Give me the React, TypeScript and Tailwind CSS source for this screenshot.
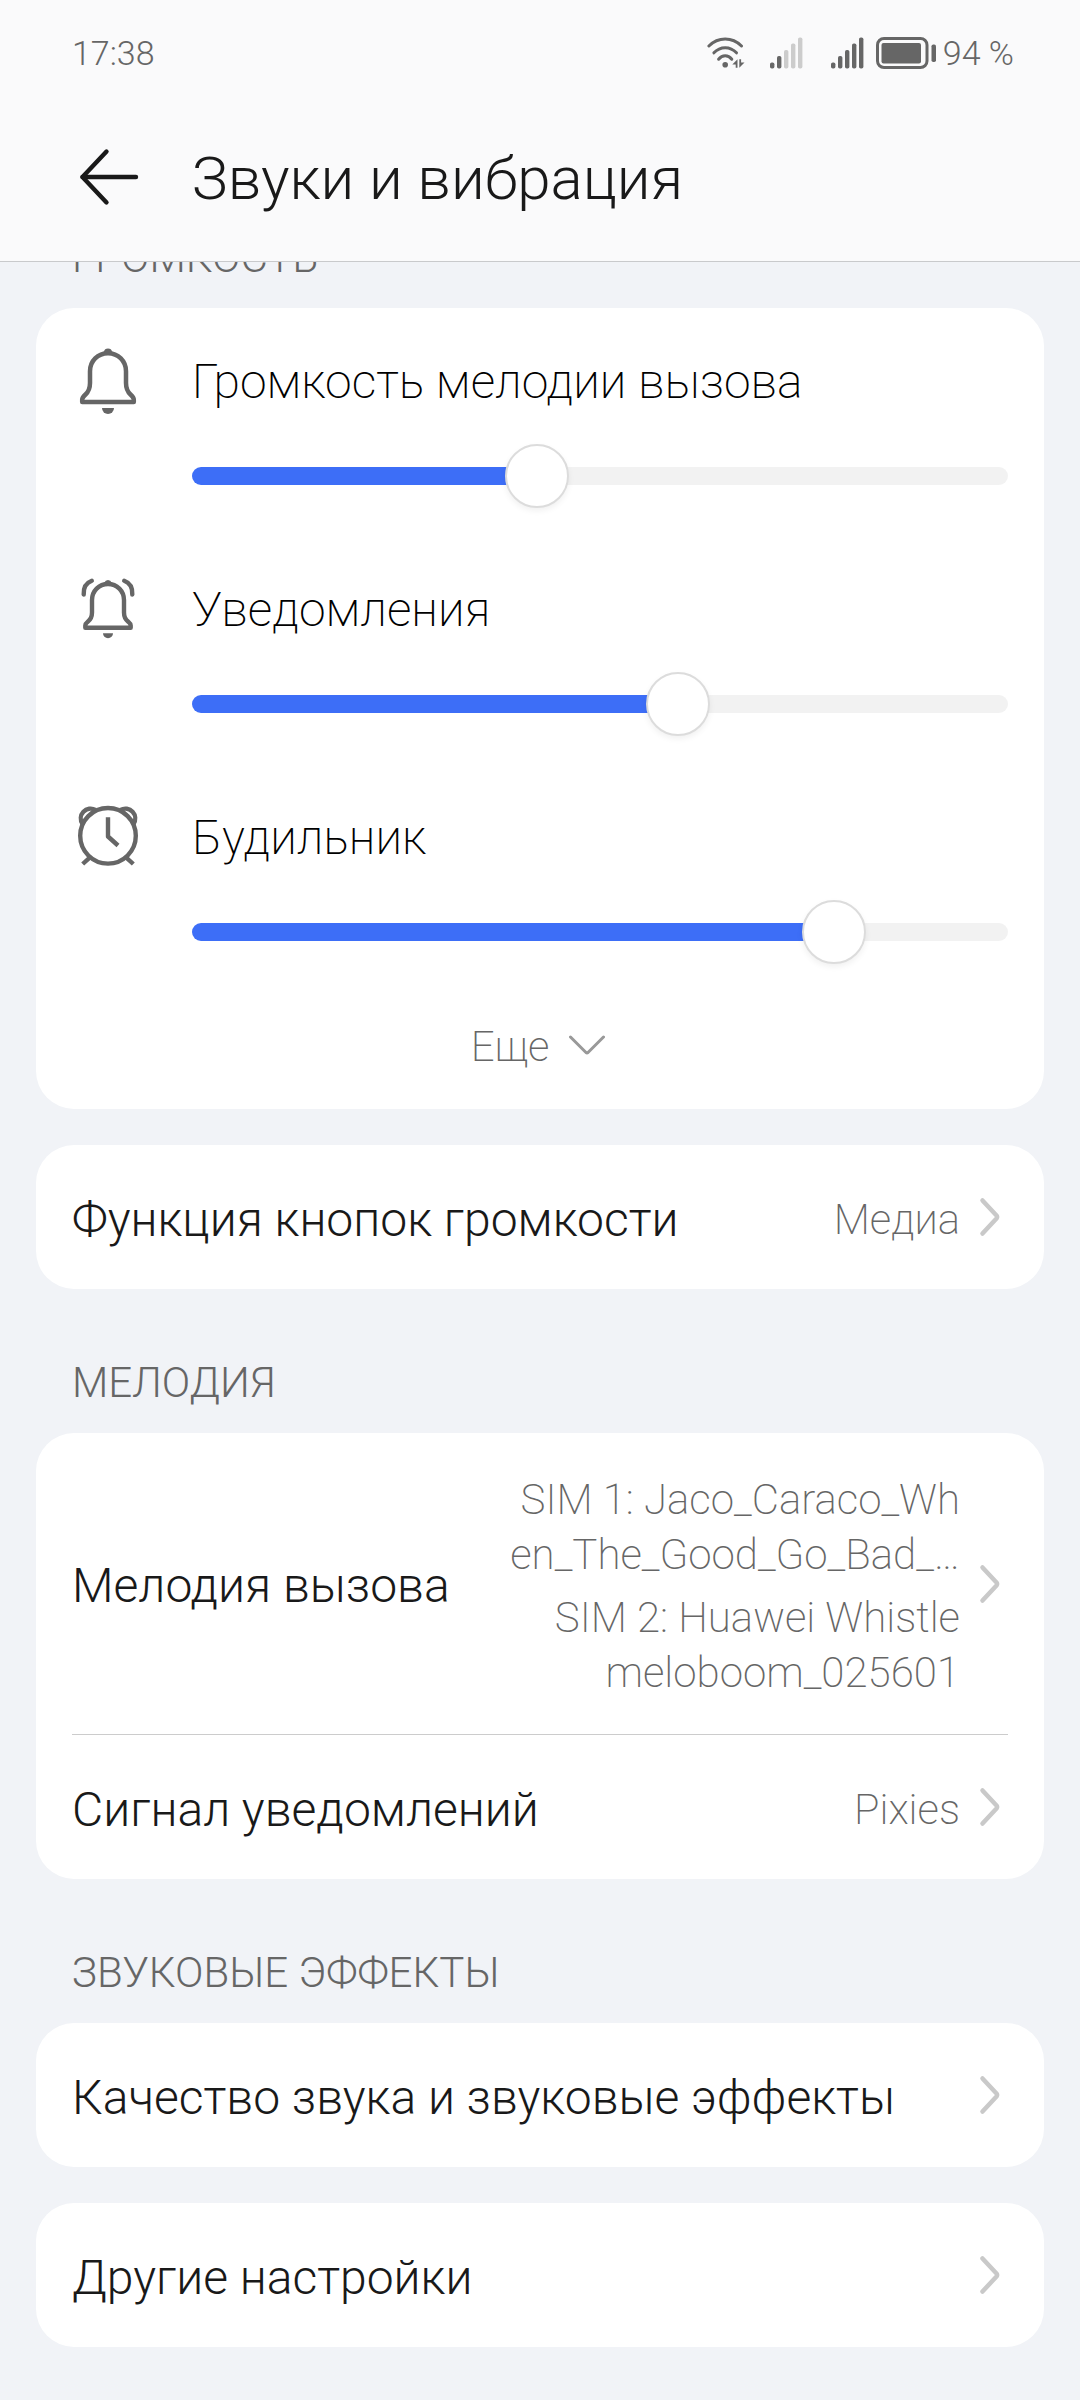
import { useState } from 'react'
import type { ReactNode } from 'react'

type Volume = { id: string; label: string; value: number; icon: ReactNode }

function BackIcon() {
  return (
    <svg viewBox="0 0 72 72" className="w-[72px] h-[72px]" fill="none" stroke="#191919" strokeWidth="4.4"
      strokeLinecap="round" strokeLinejoin="round" aria-hidden="true">
      <path d="M10.5 34H64" />
      <path d="M34.500 8.500L10.500 34l24 25.500" />
    </svg>
  )
}

function BellIcon() {
  return (
    <svg viewBox="0 0 72 72" className="w-[72px] h-[72px] shrink-0" fill="none" stroke="#666" strokeWidth="4.5"
      strokeLinejoin="round" aria-hidden="true">
      <path d="M36 9.2c-10.200 0-18 8-18 18V39c0 6-1.800 9-4.500 11.500C11 52.800 10.200 54 10.200 55.500V58h51.600v-2.500c0-1.500-.8-2.700-3.300-5C55.800 48 54 45 54 39V27.200c0-10-7.800-18-18-18z" />
      <path d="M31.800 8a4.300 4.300 0 0 1 8.400 0z" fill="#666" stroke="none" />
      <path d="M30 64h12a6 6 0 0 1-12 0z" fill="#666" stroke="none" />
    </svg>
  )
}

function BellRingIcon() {
  return (
    <svg viewBox="0 0 72 72" className="w-[72px] h-[72px] shrink-0" fill="none" stroke="#666" strokeWidth="4.4"
      strokeLinejoin="round" aria-hidden="true">
      <path d="M36 12c-9 0-16 7-16 16v12.500c0 5-1.500 7-4 9-1.800 1.500-2.700 2.500-2.700 4v2.300h45.400v-2.300c0-1.500-.9-2.500-2.700-4-2.500-2-4-4-4-9V28c0-9-7-16-16-16z" />
      <path d="M32.400 10.500a3.800 3.800 0 0 1 7.200 0z" fill="#666" stroke="none" />
      <path d="M31 61.300h10a5 5 0 0 1-10 0z" fill="#666" stroke="none" />
      <path d="M11.700 22.500c-.3-6.500 2.600-11.700 8.100-13.700M60.300 22.500c.3-6.500-2.600-11.700-8.100-13.700" strokeLinecap="round" />
    </svg>
  )
}

function AlarmIcon() {
  return (
    <svg viewBox="0 0 72 72" className="w-[72px] h-[72px] shrink-0" fill="none" stroke="#666" strokeWidth="4.4"
      strokeLinejoin="round" aria-hidden="true">
      <circle cx="36" cy="35.800" r="27.800" />
      <path d="M36 17.200V36.500l10 9" />
      <path d="M10.500 24A9.800 9.800 0 0 1 23.500 10M61.500 24A9.800 9.800 0 0 0 48.500 10" />
      <path d="M18 57.300l-7.300 6.700M54 57.300l7.300 6.700" />
    </svg>
  )
}

function WifiIcon() {
  return (
    <svg viewBox="0 0 38 32" className="w-[38px] h-8" fill="none" stroke="#666" strokeWidth="3"
      strokeLinecap="round" aria-hidden="true">
      <path d="M1.900 9c9.300-9.300 23.300-9.300 32.600 0" />
      <path d="M6.900 15.800c6.400-6.800 16.200-6.800 22.600 0" />
      <path d="M11.600 22.200c3.700-4.700 9.500-4.700 13.200 0" />
      <circle cx="18.200" cy="27.800" r="2.800" fill="#666" stroke="none" />
      <path d="M30.500 22.300v8.400h-1.800v-3.300h-3.400zM32.300 30.700v-8.400h1.800v3.300h3.400z" fill="#666" stroke="none" />
    </svg>
  )
}

function SignalIcon({ level }: { level: number }) {
  return (
    <svg viewBox="0 0 33 32" className="w-[33px] h-8" aria-hidden="true">
      {[6, 12.500, 18.500, 25, 31].map((h, i) => (
        <rect key={h} x={i * 7} y={31.500 - h} width="4.400" height={h} rx="1.800"
          fill={i < level ? '#666' : '#ccc'} />
      ))}
    </svg>
  )
}

function BatteryIcon() {
  return (
    <svg viewBox="0 0 60 32" className="w-[60px] h-8" aria-hidden="true">
      <rect x="1.500" y="1.500" width="49.500" height="29" rx="6.500" fill="none" stroke="#666" strokeWidth="3" />
      <rect x="5.500" y="6" width="39.500" height="20.500" rx="2" fill="#666" />
      <rect x="55.500" y="7.500" width="4.500" height="17.500" rx="1.800" fill="#666" />
    </svg>
  )
}

function ChevronRight() {
  return (
    <svg viewBox="0 0 36 72" className="w-9 h-[72px] shrink-0" fill="none" stroke="#c9c9c9" strokeWidth="4.500"
      strokeLinecap="round" strokeLinejoin="round" aria-hidden="true">
      <path d="M10.500 19.500L24.500 34.500q1.200 1.500 0 3L10.500 52.500" />
    </svg>
  )
}

function ChevronDown() {
  return (
    <svg viewBox="0 0 36 36" className="w-9 h-9" fill="none" stroke="#999" strokeWidth="3"
      strokeLinecap="round" strokeLinejoin="round" aria-hidden="true">
      <path d="M1.500 8L17 23.500q1 .8 2 0L34.500 8" />
    </svg>
  )
}

function Card({ children }: { children: ReactNode }) {
  return <div className="rounded-[38px] bg-white px-9">{children}</div>
}

function SectionTitle({ children }: { children: ReactNode }) {
  return (
    <h2 className="h-36 pt-[66px] px-9 text-[42px] leading-[56px] font-light text-[#666]">
      {children}
    </h2>
  )
}

function Row({ label, values = [] }: { label: string; values?: string[] }) {
  return (
    <a href="#" className="flex items-center min-h-36 py-[34px]">
      <span className="flex-1 pt-[5px] text-[48px] leading-[56px] font-light text-[#191919]">{label}</span>
      <span className="flex flex-col gap-2 pt-[5px] pr-3 text-right text-[42px] leading-[55px] font-extralight text-[#666]">
        {values.map(v => <span key={v} className="whitespace-pre-line">{v}</span>)}
      </span>
      <ChevronRight />
    </a>
  )
}

function VolumeRow({ id, label, value, icon }: Volume) {
  const [level, setLevel] = useState(value)
  // the thumb is 64px wide, so its centre never reaches the ends of the track
  const stop = `calc(32px + (100% - 64px) * ${level / 1000})`

  return (
    <div className="flex items-start gap-12">
      {icon}
      <div className="flex-1">
        <label htmlFor={id} className="block text-[48px] leading-[76px] font-extralight text-black">{label}</label>
        <input id={id} type="range" min={0} max={1000} value={level}
          onChange={e => setLevel(Number(e.target.value))}
          className="block mt-6 w-full h-16 appearance-none bg-transparent [&::-webkit-slider-runnable-track]:h-[18px] [&::-webkit-slider-runnable-track]:rounded-full [&::-webkit-slider-runnable-track]:bg-[image:var(--track)] [&::-webkit-slider-thumb]:appearance-none [&::-webkit-slider-thumb]:-mt-[23px] [&::-webkit-slider-thumb]:w-16 [&::-webkit-slider-thumb]:h-16 [&::-webkit-slider-thumb]:rounded-full [&::-webkit-slider-thumb]:bg-white [&::-webkit-slider-thumb]:border-2 [&::-webkit-slider-thumb]:border-[#dcdcdc] [&::-webkit-slider-thumb]:shadow-[0_3px_6px_rgba(0,0,0,0.06)]"
          style={{ '--track': `linear-gradient(to right, #3d6ef7 ${stop}, #f2f2f2 ${stop})` } as React.CSSProperties} />
      </div>
    </div>
  )
}

const volumes: Volume[] = [
  { id: 'ring',   label: 'Громкость мелодии вызова', value: 416, icon: <BellIcon /> },
  { id: 'notify', label: 'Уведомления',              value: 604, icon: <BellRingIcon /> },
  { id: 'alarm',  label: 'Будильник',                value: 811, icon: <AlarmIcon /> },
]

export default function App() {
  return (
    <div className="min-h-screen bg-[#f1f3f7] font-['Roboto',sans-serif]">
      <header className="sticky top-0 z-10 border-b border-[#c9cacc] bg-[#fafafb] pb-[10px]">
        <div className="flex items-center justify-between h-[106px] pl-[72px] pr-[66px] text-[34px] font-light text-[#666]">
          <span>17:38</span>
          <div className="flex items-center">
            <WifiIcon />
            <span className="ml-[25px]"><SignalIcon level={2} /></span>
            <span className="ml-7"><SignalIcon level={5} /></span>
            <span className="ml-3"><BatteryIcon /></span>
            <span className="ml-[7px]">94 %</span>
          </div>
        </div>
        <div className="flex items-center gap-12 h-[145px] px-[72px]">
          <button type="button" aria-label="Назад"><BackIcon /></button>
          <h1 className="text-[60px] leading-[72px] font-light text-[#191919]">Звуки и вибрация</h1>
        </div>
      </header>

      {/* the list is scrolled a little, its first heading sits half under the header */}
      <main className="-mt-[98px] px-9 pb-[52px]">
        <SectionTitle>ГРОМКОСТЬ</SectionTitle>
        <Card>
          <div className="flex flex-col gap-16 pt-9">
            {volumes.map(v => <VolumeRow key={v.id} {...v} />)}
          </div>
          <button type="button" className="flex items-center justify-center gap-5 w-full h-[125px] mt-5 pr-1 text-[42px] font-extralight text-[#666]">
            Еще
            <ChevronDown />
          </button>
        </Card>
        <div className="mt-9">
          <Card><Row label="Функция кнопок громкости" values={['Медиа']} /></Card>
        </div>

        <SectionTitle>МЕЛОДИЯ</SectionTitle>
        <Card>
          <div className="divide-y divide-[#ccc]">
            <Row label="Мелодия вызова"
              values={['SIM 1: Jaco_Caraco_Wh\nen_The_Good_Go_Bad_…', 'SIM 2: Huawei Whistle\nmeloboom_025601']} />
            <Row label="Сигнал уведомлений" values={['Pixies']} />
          </div>
        </Card>

        <SectionTitle>ЗВУКОВЫЕ ЭФФЕКТЫ</SectionTitle>
        <div className="flex flex-col gap-9">
          <Card><Row label="Качество звука и звуковые эффекты" /></Card>
          <Card><Row label="Другие настройки" /></Card>
        </div>
      </main>
    </div>
  )
}
